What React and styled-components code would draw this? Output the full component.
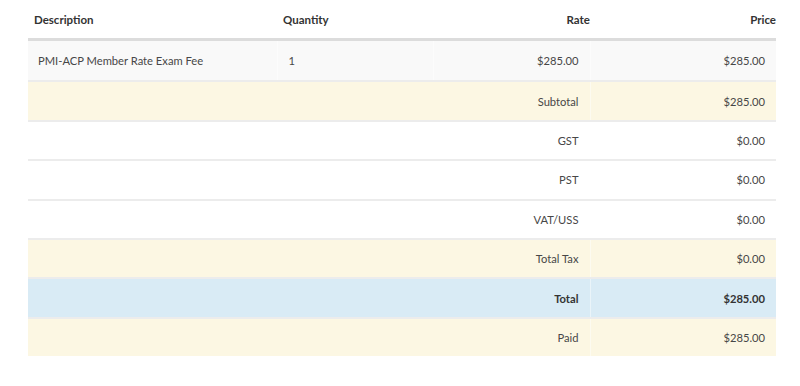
import styled, { createGlobalStyle } from "styled-components";

const GlobalStyle = createGlobalStyle`
  body {
    margin: 0;
    background: #fff;
    font-family: Lato, "Open Sans", sans-serif;
  }
`;

const lines = [
  { label: "Subtotal", value: "$285.00", tone: "warning" },
  { label: "GST", value: "$0.00" },
  { label: "PST", value: "$0.00" },
  { label: "VAT/USS", value: "$0.00" },
  { label: "Total Tax", value: "$0.00", tone: "warning" },
  { label: "Total", value: "$285.00", tone: "info", strong: true },
  { label: "Paid", value: "$285.00", tone: "warning" },
];

const tones = {
  warning: "#fcf7e3",
  info: "#d9ebf5",
  plain: "#fff",
  striped: "#f9f9f9",
};

export default function App() {
  return (
    <>
      <GlobalStyle />
      <Wrapper>
        <Table>
          <colgroup>
            <col style={{ width: 249 }} />
            <col style={{ width: 156 }} />
            <col style={{ width: 157 }} />
            <col style={{ width: 186 }} />
          </colgroup>
          <thead>
            <tr>
              <Th>Description</Th>
              <Th>Quantity</Th>
              <Th $right>Rate</Th>
              <Th $right>Price</Th>
            </tr>
          </thead>
          <tbody>
            <Row $tone="striped">
              <Td>PMI-ACP Member Rate Exam Fee</Td>
              <Td $qty>1</Td>
              <Td $right>$285.00</Td>
              <Td $right>$285.00</Td>
            </Row>
            {lines.map((line) => (
              <Row key={line.label} $tone={line.tone || "plain"}>
                <Td colSpan={3} $right $strong={line.strong}>
                  {line.label}
                </Td>
                <Td $right $strong={line.strong}>{line.value}</Td>
              </Row>
            ))}
          </tbody>
        </Table>
      </Wrapper>
    </>
  );
}

const Wrapper = styled.div`
  padding: 0 24px 0 28px;
`;

const Table = styled.table`
  width: 748px;
  border-collapse: collapse;
  table-layout: fixed;
  font-size: 11.2px;
`;

const Th = styled.th`
  height: 38px;
  padding: 0 0 0 6px;
  text-align: ${(p) => (p.$right ? "right" : "left")};
  color: #333;
  font-size: 11.5px;
  font-weight: 700;
  border-bottom: 3px solid #dcdcdc;
  vertical-align: middle;
`;

const Row = styled.tr`
  background: ${(p) => tones[p.$tone]};
`;

const Td = styled.td`
  height: 37.4px;
  padding: 0 11px 0 ${(p) => (p.$qty ? "11px" : "10px")};
  border-top: 2px solid #ececec;
  border-left: 1px solid rgba(255, 255, 255, 0.45);
  text-align: ${(p) => (p.$right ? "right" : "left")};
  color: ${(p) => (p.$strong ? "#333" : "#474747")};
  font-weight: ${(p) => (p.$strong ? 700 : 400)};
  vertical-align: middle;
  tr:first-child > & {
    border-top: none;
    height: 39.4px;
  }
  &:first-child {
    border-left: none;
  }
`;
